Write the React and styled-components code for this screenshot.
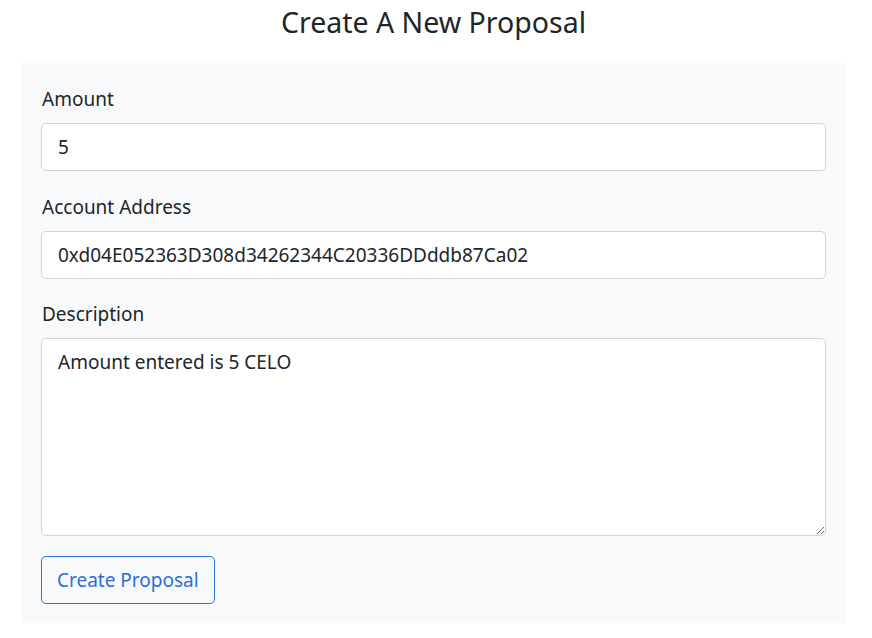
import React from 'react'
import styled, { createGlobalStyle } from 'styled-components'

const GlobalStyle = createGlobalStyle`
  * {
    box-sizing: border-box;
  }

  body {
    margin: 0;
    background: #fff;
    color: #212529;
    font-family: "Noto Sans", "Open Sans", sans-serif;
  }
`

const Page = styled.div`
  width: 825px;
  margin-left: 21px;
  padding-top: 5px;
`

const Title = styled.h3`
  margin: 0 0 24px;
  font-size: 28.5px;
  font-weight: 400;
  line-height: 34px;
  text-align: center;
`

const Panel = styled.form`
  background: #f8f9fa;
  padding: 21px 20px 19px 20px;
`

const Field = styled.div`
  margin-bottom: ${props => props.gap};
`

const Label = styled.label`
  display: block;
  margin-bottom: 9px;
  margin-left: 1px;
  font-size: 19px;
  line-height: 30px;
`

const Input = styled.input`
  display: block;
  width: 100%;
  height: 48px;
  padding: 8px 16px;
  font-family: inherit;
  font-size: 19px;
  line-height: 1.5;
  color: #212529;
  background: #fff;
  border: 1px solid #ced4da;
  border-radius: 5px;
  outline: none;
`

const TextArea = styled.textarea`
  display: block;
  width: 100%;
  height: 198px;
  padding: 9px 16px;
  font-family: inherit;
  font-size: 19px;
  line-height: 1.5;
  color: #212529;
  background: #fff;
  border: 1px solid #ced4da;
  border-radius: 5px;
  outline: none;
`

const Button = styled.button`
  display: block;
  height: 48px;
  padding: 8px 15px;
  font-family: inherit;
  font-size: 19px;
  line-height: 1.5;
  color: #2a6fdb;
  background: transparent;
  border: 1px solid #2a6fdb;
  border-radius: 5px;
  cursor: pointer;
`

const App = () => (
  <>
    <GlobalStyle />
    <Page>
      <Title>Create A New Proposal</Title>
      <Panel onSubmit={e => e.preventDefault()}>
        <Field gap="21px">
          <Label>Amount</Label>
          <Input defaultValue="5" />
        </Field>
        <Field gap="20px">
          <Label>Account Address</Label>
          <Input defaultValue="0xd04E052363D308d34262344C20336DDddb87Ca02" />
        </Field>
        <Field gap="20px">
          <Label>Description</Label>
          <TextArea defaultValue="Amount entered is 5 CELO" />
        </Field>
        <Button type="submit">Create Proposal</Button>
      </Panel>
    </Page>
  </>
)

export default App
